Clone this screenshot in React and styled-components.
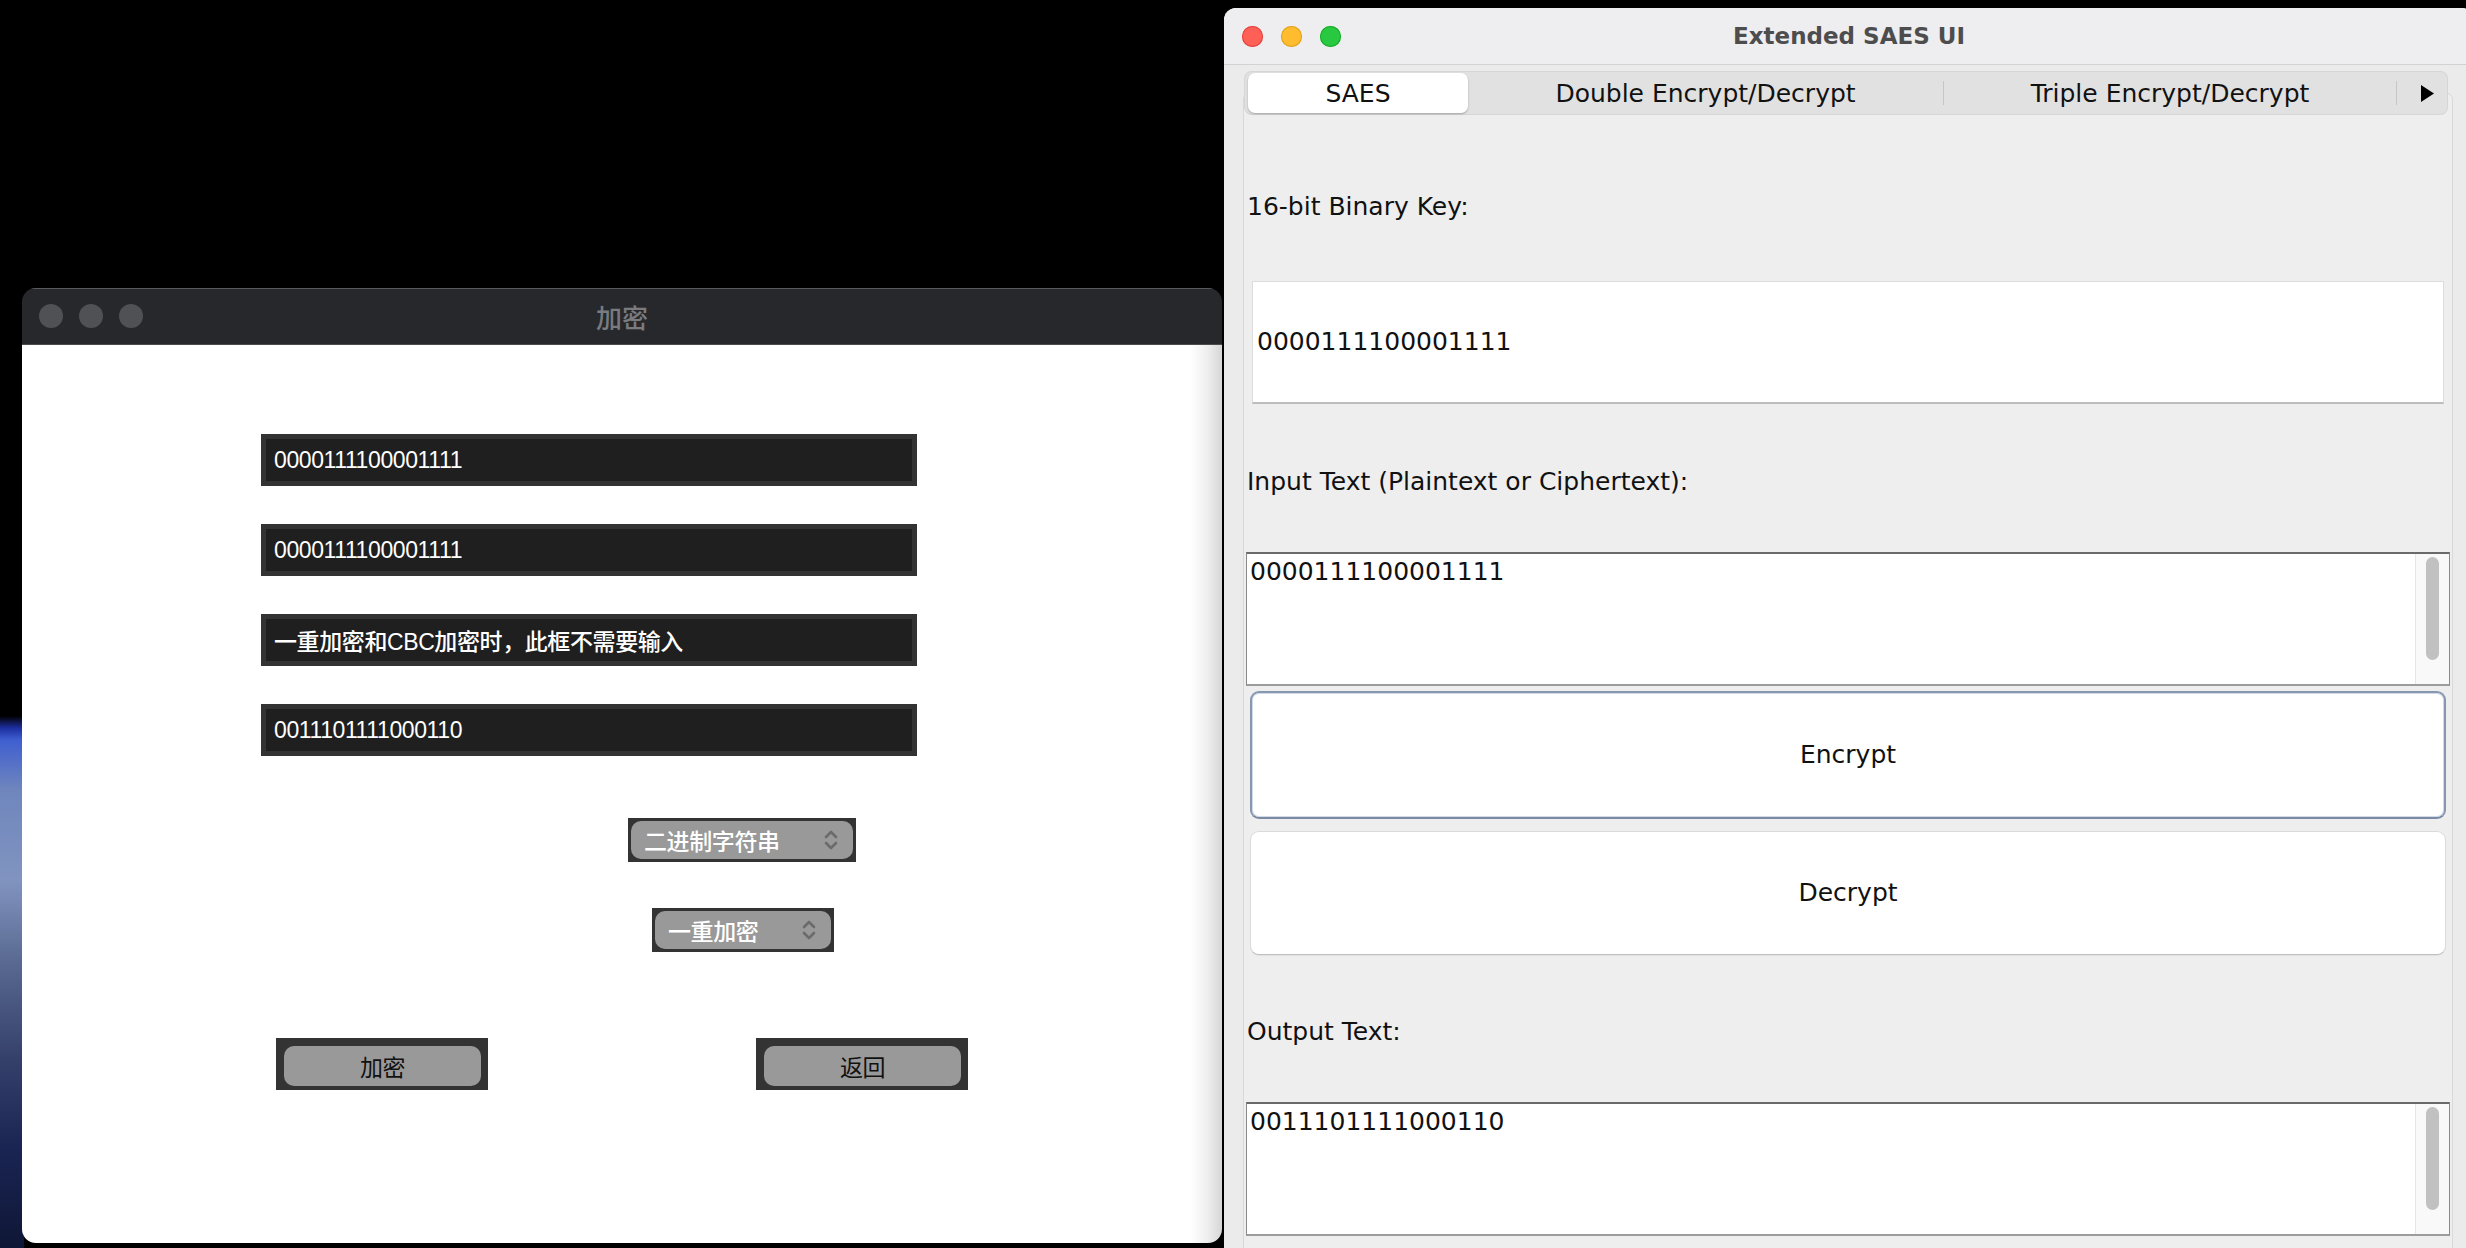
import React from 'react'
import styled, { createGlobalStyle } from 'styled-components'

const GlobalStyle = createGlobalStyle`
  html, body {
    margin: 0;
    padding: 0;
    background: #000;
    overflow: hidden;
  }
  * {
    box-sizing: border-box;
  }
`

const Desktop = styled.div`
  width: 2466px;
  height: 1248px;
  display: flex;
  align-items: flex-start;
  overflow: hidden;
  background-color: #000;
  background-image: linear-gradient(
    to bottom,
    #000 0,
    #000 716px,
    #1d2ea0 728px,
    #3f5fd0 740px,
    #6f86bd 790px,
    #8194c0 880px,
    #5a6a92 960px,
    #34406a 1060px,
    #1a2452 1150px,
    #0f1736 1248px
  );
  background-size: 24px 100%;
  background-repeat: no-repeat;
`

/* ---------- left (dark themed) window ---------- */

const LeftPane = styled.div`
  width: 1224px;
  flex-shrink: 0;
  padding: 288px 0 0 22px;
`

const DarkWindow = styled.div`
  width: 1200px;
  height: 955px;
  border-radius: 14px;
  overflow: hidden;
  display: flex;
  flex-direction: column;
`

const DarkTitleBar = styled.div`
  height: 57px;
  flex-shrink: 0;
  background: #27282c;
  border-bottom: 1px solid #4b4b4e;
  box-shadow: inset 0 1px 0 #5a5a5e;
  display: grid;
  grid-template-columns: 1fr auto 1fr;
  align-items: center;
  padding: 0 17px;
`

const Lights = styled.div`
  display: flex;
  gap: ${(p) => p.$gap}px;
`

const Light = styled.span`
  width: ${(p) => p.$size}px;
  height: ${(p) => p.$size}px;
  border-radius: 50%;
  background: ${(p) => p.$color};
  box-shadow: ${(p) => (p.$ring ? `inset 0 0 0 1px ${p.$ring}` : 'none')};
`

const DarkTitle = styled.div`
  font-family: "Liberation Sans", "Noto Sans CJK SC", sans-serif;
  font-size: 26px;
  font-weight: 500;
  color: #7a7b7f;
`

const DarkBody = styled.div`
  flex: 1;
  background: linear-gradient(to right, #fff 0, #fff 1168px, #f0f0f0 1184px, #d6d6d6 1200px);
  padding: 89px 0 0 239px;
  display: flex;
  flex-direction: column;
  align-items: flex-start;
  font-family: "Liberation Sans", "Noto Sans CJK SC", sans-serif;
  font-size: 23px;
  font-weight: 500;
  letter-spacing: -0.4px;
`

const FieldStack = styled.div`
  display: flex;
  flex-direction: column;
  gap: 38px;
`

const DarkField = styled.div`
  width: 656px;
  height: 52px;
  background: #1f1f1f;
  border: 5px solid #333;
  color: #fff;
  padding-left: 8px;
  display: flex;
  align-items: center;
`

const SelectBox = styled.div`
  width: ${(p) => p.$width}px;
  height: 44px;
  margin-top: ${(p) => p.$top}px;
  margin-left: ${(p) => p.$left}px;
  background: #333;
  padding: 3px;
`

const SelectInner = styled.div`
  height: 100%;
  background: #999;
  border-radius: 10px;
  display: flex;
  align-items: center;
  justify-content: space-between;
  padding: 0 15px 0 13px;
  color: #fff;
`

const ButtonRow = styled.div`
  display: flex;
  gap: 268px;
  margin: 86px 0 0 15px;
`

const GrayButton = styled.div`
  width: 212px;
  height: 52px;
  background: #333;
  padding: 8px 7px 4px 8px;
`

const GrayButtonFace = styled.div`
  height: 100%;
  background: #999;
  border-radius: 10px;
  display: flex;
  align-items: center;
  justify-content: center;
  color: #111;
  font-weight: 400;
`

const Chevrons = () => (
  <svg width="14" height="24" viewBox="0 0 14 24" fill="none">
    <polyline points="2,9 7,4 12,9" stroke="#6b6b6b" strokeWidth="2.6" strokeLinecap="round" strokeLinejoin="round" />
    <polyline points="2,15 7,20 12,15" stroke="#6b6b6b" strokeWidth="2.6" strokeLinecap="round" strokeLinejoin="round" />
  </svg>
)

/* ---------- right (aqua) window ---------- */

const AquaWindow = styled.div`
  width: 1250px;
  height: 1260px;
  flex-shrink: 0;
  margin-top: 8px;
  background: #ebebeb;
  border-radius: 12px 12px 0 0;
  overflow: hidden;
  display: flex;
  flex-direction: column;
  font-family: "DejaVu Sans", "Noto Sans", sans-serif;
  font-size: 25px;
  color: #111;
`

const AquaTitleBar = styled.div`
  height: 57px;
  flex-shrink: 0;
  background: #eeeef0;
  border-bottom: 1px solid #d2d2d2;
  display: grid;
  grid-template-columns: 1fr auto 1fr;
  align-items: center;
  padding: 0 18px;
`

const AquaTitle = styled.div`
  font-weight: bold;
  font-size: 23px;
  color: #4d4d4d;
`

const AquaBody = styled.div`
  flex: 1;
  padding: 6px 21px 0 19px;
  display: flex;
  flex-direction: column;
`

const TabStrip = styled.div`
  position: relative;
  z-index: 1;
  height: 44px;
  margin: 0 5px 0 1px;
  padding: 0 0 0 4px;
  background: #e1e1e1;
  border-radius: 8px;
  box-shadow: inset 0 0 0 1px #d6d6d6;
  display: flex;
  align-items: center;
`

const Tab = styled.div`
  width: ${(p) => p.$width}px;
  height: 40px;
  display: flex;
  align-items: center;
  justify-content: center;
  background: ${(p) => (p.$active ? '#fff' : 'transparent')};
  border-radius: 7px;
  box-shadow: ${(p) => (p.$active ? '0 1px 2px rgba(0,0,0,0.28)' : 'none')};
`

const TabDivider = styled.span`
  width: 1px;
  height: 24px;
  background: #c6c6c6;
`

const TabMore = styled.div`
  flex: 1;
  display: flex;
  align-items: center;
  padding-left: 24px;
`

const Panel = styled.div`
  margin-top: -22px;
  flex: 1;
  background: #eeeeee;
  border: 1px solid #d9d9d9;
  border-radius: 6px;
  padding: 45px 2px 0 2px;
`

const FormGrid = styled.div`
  display: grid;
  grid-template-rows: repeat(8, 137.5px);
`

const FieldLabel = styled.div`
  display: flex;
  align-items: center;
  padding: 0 0 3px 1px;
`

const KeyField = styled.div`
  margin: 4px 6px 10px 6px;
  background: #fff;
  border: 1px solid #dcdcdc;
  border-bottom: 2px solid #bdbdbd;
  display: flex;
  align-items: center;
  padding-left: 4px;
`

const TextArea = styled.div`
  margin: 0 0 3px 0;
  background: #fff;
  border-top: 2px solid #6a6a6a;
  border-left: 1px solid #8a8a8a;
  border-right: 1px solid #8a8a8a;
  border-bottom: 2px solid #9c9c9c;
  display: flex;
`

const TextAreaContent = styled.div`
  flex: 1;
  padding: 3px 3px;
  line-height: 30px;
`

const ScrollTrack = styled.div`
  width: 34px;
  background: #f9f9f9;
  border-left: 1px solid #e6e6e6;
  display: flex;
  justify-content: center;
  padding-top: 3px;
`

const ScrollThumb = styled.div`
  width: 13px;
  height: 103px;
  border-radius: 7px;
  background: #c1c1c1;
`

const ActionButton = styled.div`
  margin: ${(p) => (p.$focused ? '2px 4px 8px 4px' : '4px 4px 9px 4px')};
  background: #fff;
  border-radius: 9px;
  border: ${(p) => (p.$focused ? '2px solid #8797b0' : '1px solid #dadada')};
  border-bottom-color: ${(p) => (p.$focused ? '#7b8ba6' : '#bfbfbf')};
  box-shadow: ${(p) => (p.$focused ? 'inset 0 0 0 1px #d3dae6' : '0 1px 1px rgba(0,0,0,0.06)')};
  display: flex;
  align-items: center;
  justify-content: center;
`

const App = () => {
  return (
    <>
      <GlobalStyle />
      <Desktop>
        <LeftPane>
          <DarkWindow>
            <DarkTitleBar>
              <Lights $gap={16}>
                <Light $size={24} $color="#505155" />
                <Light $size={24} $color="#505155" />
                <Light $size={24} $color="#505155" />
              </Lights>
              <DarkTitle>加密</DarkTitle>
              <span />
            </DarkTitleBar>
            <DarkBody>
              <FieldStack>
                <DarkField>0000111100001111</DarkField>
                <DarkField>0000111100001111</DarkField>
                <DarkField>一重加密和CBC加密时，此框不需要输入</DarkField>
                <DarkField>0011101111000110</DarkField>
              </FieldStack>
              <SelectBox $width={228} $top={62} $left={367}>
                <SelectInner>
                  <span>二进制字符串</span>
                  <Chevrons />
                </SelectInner>
              </SelectBox>
              <SelectBox $width={182} $top={46} $left={391}>
                <SelectInner>
                  <span>一重加密</span>
                  <Chevrons />
                </SelectInner>
              </SelectBox>
              <ButtonRow>
                <GrayButton>
                  <GrayButtonFace>加密</GrayButtonFace>
                </GrayButton>
                <GrayButton>
                  <GrayButtonFace>返回</GrayButtonFace>
                </GrayButton>
              </ButtonRow>
            </DarkBody>
          </DarkWindow>
        </LeftPane>

        <AquaWindow>
          <AquaTitleBar>
            <Lights $gap={18}>
              <Light $size={21} $color="#fe5f57" $ring="#e0443e" />
              <Light $size={21} $color="#febc2e" $ring="#dea123" />
              <Light $size={21} $color="#28c840" $ring="#1aab29" />
            </Lights>
            <AquaTitle>Extended SAES UI</AquaTitle>
            <span />
          </AquaTitleBar>
          <AquaBody>
            <TabStrip>
              <Tab $width={220} $active>SAES</Tab>
              <Tab $width={475}>Double Encrypt/Decrypt</Tab>
              <TabDivider />
              <Tab $width={452}>Triple Encrypt/Decrypt</Tab>
              <TabDivider />
              <TabMore>
                <svg width="13" height="17" viewBox="0 0 13 17">
                  <polygon points="0,0 13,8.5 0,17" fill="#000" />
                </svg>
              </TabMore>
            </TabStrip>
            <Panel>
              <FormGrid>
                <FieldLabel>16-bit Binary Key:</FieldLabel>
                <KeyField>0000111100001111</KeyField>
                <FieldLabel>Input Text (Plaintext or Ciphertext):</FieldLabel>
                <TextArea>
                  <TextAreaContent>0000111100001111</TextAreaContent>
                  <ScrollTrack>
                    <ScrollThumb />
                  </ScrollTrack>
                </TextArea>
                <ActionButton $focused>Encrypt</ActionButton>
                <ActionButton>Decrypt</ActionButton>
                <FieldLabel>Output Text:</FieldLabel>
                <TextArea>
                  <TextAreaContent>0011101111000110</TextAreaContent>
                  <ScrollTrack>
                    <ScrollThumb />
                  </ScrollTrack>
                </TextArea>
              </FormGrid>
            </Panel>
          </AquaBody>
        </AquaWindow>
      </Desktop>
    </>
  )
}

export default App
